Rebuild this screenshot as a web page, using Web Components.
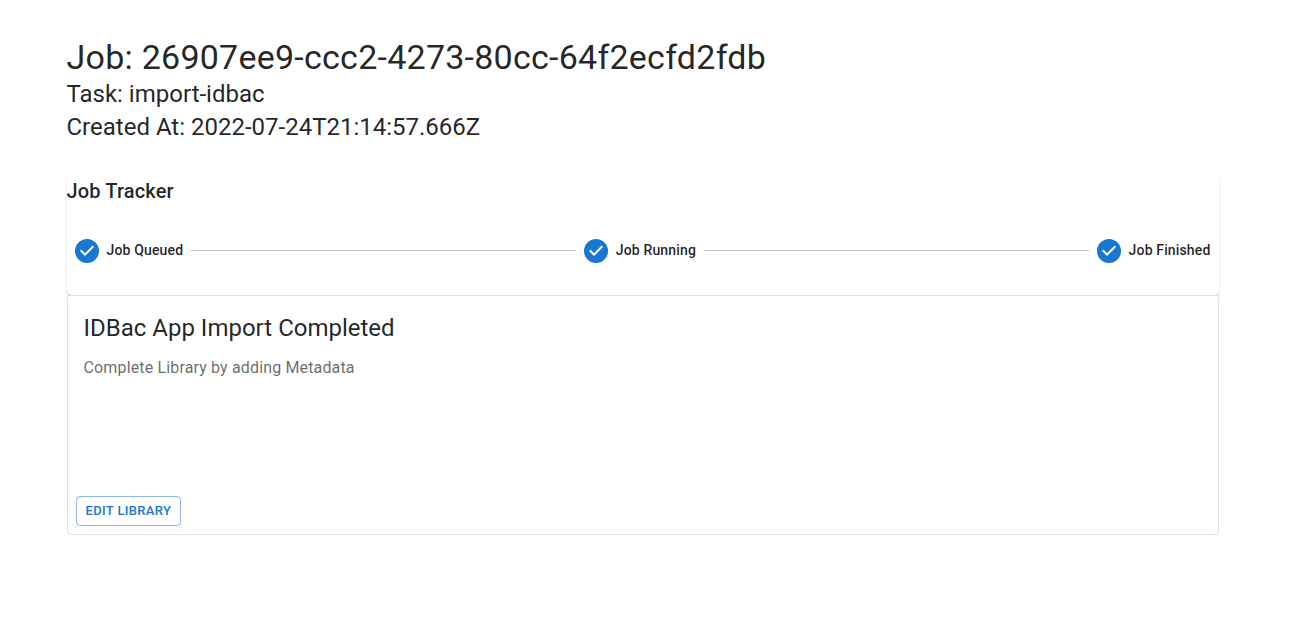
<!DOCTYPE html>
<html lang="en"><head><meta charset="utf-8"><title>Job</title>
<style>body{margin:0;background:#fff;font-family:Roboto,sans-serif;color:rgba(0,0,0,.87)}</style></head>
<body><job-page></job-page>
<script>
const define=(name,html)=>customElements.define(name,class extends HTMLElement{
  constructor(){super();const t=document.createElement('template');t.innerHTML=html;this.attachShadow({mode:'open'}).append(t.content.cloneNode(true));}
});
define('job-heading',`<style>
:host{display:block}
h4,h5{margin:0;font-weight:400}
h4{font-size:34px;line-height:42px;letter-spacing:.25px}
h5{font-size:24px;line-height:33px;letter-spacing:0}
</style><h4><slot name="title"></slot></h4><h5><slot name="task"></slot></h5><h5><slot name="created"></slot></h5>`);
define('job-step',`<style>
:host{display:flex;align-items:center;padding:0 8px;font-size:14px;line-height:20px;font-weight:500;letter-spacing:.14994px;white-space:nowrap}
svg{display:block;width:24px;height:24px;margin-right:8px;fill:#1976d2}
span{padding-bottom:2px}
</style><svg viewBox="0 0 24 24"><path d="M12 0a12 12 0 1 0 0 24 12 12 0 0 0 0-24zm-2 17l-5-5 1.4-1.4 3.6 3.6 7.6-7.6L19 8l-9 9z"/></svg><span><slot></slot></span>`);
define('step-line',`<style>:host{display:block;flex:1 1 auto;border-top:1px solid #bdbdbd;margin-bottom:2px}</style>`);
define('job-tracker',`<style>
:host{display:block;box-sizing:border-box;height:120px;border-radius:4px;background:#fff;box-shadow:0 2px 1px -1px rgba(0,0,0,.2),0 1px 1px 0 rgba(0,0,0,.14),0 1px 3px 0 rgba(0,0,0,.12)}
h6{margin:0;font-size:20px;line-height:32px;font-weight:500;letter-spacing:.15px}
div{display:flex;align-items:center;padding-top:32px}
</style><h6><slot name="title"></slot></h6><div><slot></slot></div>`);
define('outline-button',`<style>
:host{display:block}
button{display:block;box-sizing:border-box;height:30px;padding:3px 9px;border:1px solid rgba(25,118,210,.5);border-radius:4px;background:transparent;color:#1976d2;font:500 13px/22.75px Roboto,sans-serif;letter-spacing:.34px;text-transform:uppercase}
</style><button><slot></slot></button>`);
define('result-card',`<style>
:host{display:flex;flex-direction:column;box-sizing:border-box;height:240px;border:1px solid rgba(0,0,0,.12);border-radius:4px;background:#fff}
section{flex:1;padding:16px}
h5{margin:0 0 8px;font-size:24px;line-height:32px;font-weight:400;letter-spacing:0}
p{margin:0;font-size:16px;line-height:32px;letter-spacing:.15px;color:rgba(0,0,0,.6)}
footer{display:flex;padding:8px}
</style><section><h5><slot name="title"></slot></h5><p><slot></slot></p></section><footer><slot name="action"></slot></footer>`);
define('job-page',`<style>
:host{display:block;padding:36px 87.5px 0 66.5px}
job-tracker{margin-top:31px}
</style>
<job-heading><span slot="title">Job: 26907ee9-ccc2-4273-80cc-64f2ecfd2fdb</span><span slot="task">Task: import-idbac</span><span slot="created">Created At: 2022-07-24T21:14:57.666Z</span></job-heading>
<job-tracker><span slot="title">Job Tracker</span><job-step>Job Queued</job-step><step-line></step-line><job-step>Job Running</job-step><step-line></step-line><job-step>Job Finished</job-step></job-tracker>
<result-card><span slot="title">IDBac App Import Completed</span>Complete Library by adding Metadata<outline-button slot="action">Edit Library</outline-button></result-card>`);
</script></body></html>
